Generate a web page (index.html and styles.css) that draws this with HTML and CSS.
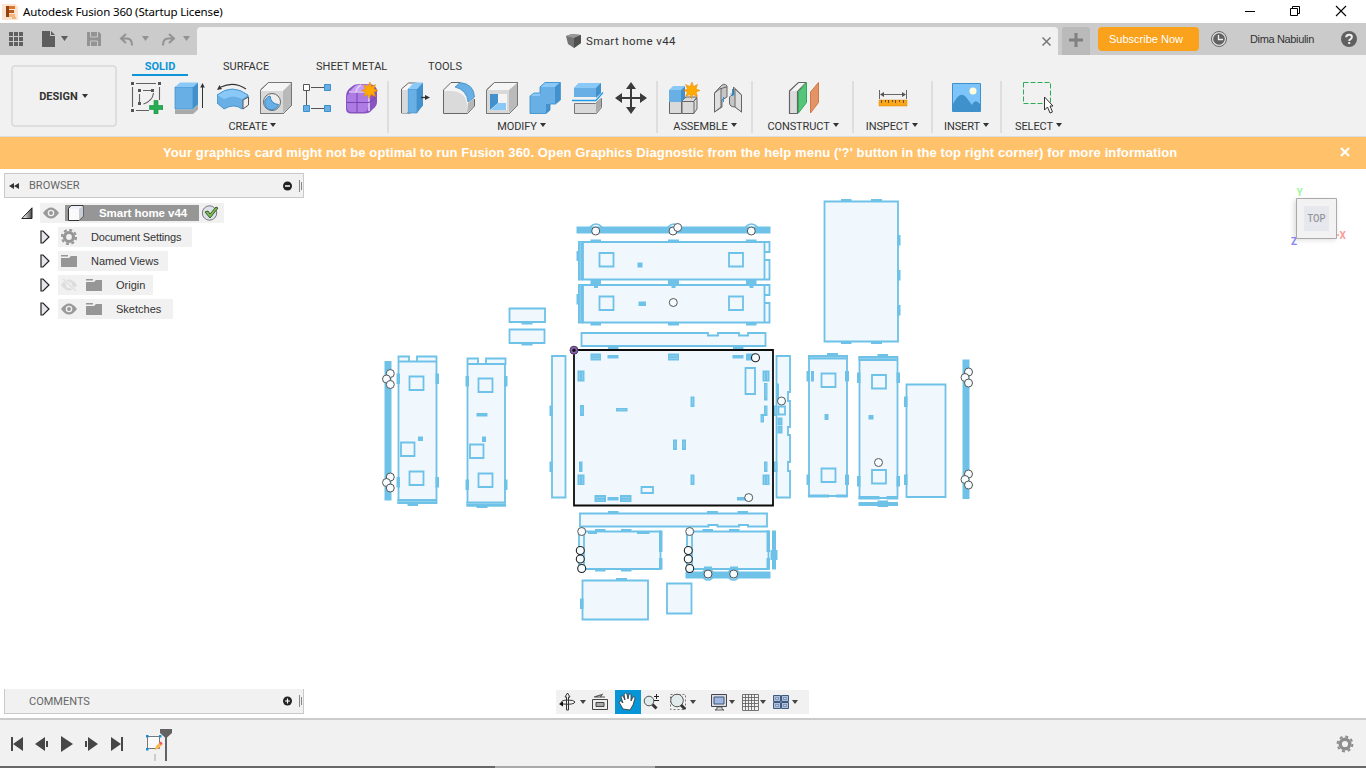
FILE: index.html
```html
<!DOCTYPE html>
<html lang="en">
<head>
<meta charset="utf-8">
<title>Autodesk Fusion 360</title>
<link rel="stylesheet" href="styles.css">
</head>
<body>
<div class="app">
<header class="titlebar">
  <svg class="logo" width="16" height="16" viewBox="0 0 16 16"><path fill="#fbe3cf" d="M0 0h13l3 3v13H0z"/><path fill="#f5b57c" d="M7 10h6v3H7zM10 13h4v2h-4z"/><path fill="#d9782d" d="M4 2h9v3H7v8H4z"/><path fill="#8e4515" d="M4 2h3v11H4z"/><path fill="#bd5a1b" d="M7 6h5v3H7z"/></svg>
  <span class="title">Autodesk Fusion 360 (Startup License)</span>
  <svg class="winctl" width="110" height="20" viewBox="0 0 110 20" fill="none" stroke="#000"><path d="M5 9.500h10M50.500 6.500h7v7h-7zM52.500 6.500v-2h7v7h-2"/><path d="m96 4 10 10m0-10-10 10" stroke-width="1.100"/></svg>
</header>
<div class="appbar">
  <div class="quick">
    <svg width="190" height="32" viewBox="0 0 190 32"><path fill="#606060" d="M9 9h4v4H9zm5 0h4v4h-4zm5 0h4v4h-4zM9 14h4v4H9zm5 0h4v4h-4zm5 0h4v4h-4zM9 19h4v4H9zm5 0h4v4h-4zm5 0h4v4h-4z"/><path fill="#5d5d5d" d="M42 8h8v5h5v11H42zM51 8l4 4h-4zM61 13h7l-3.500 5z"/><g fill="#939393"><path d="M87 9h12l2 2v12H87zM142 13h7l-3.500 5zM183 13h7l-3.500 5z"/><path fill="none" stroke="#cbcbcb" d="M90.500 9v5h7V9M90.500 23v-5h7v5"/><path d="M94 10h2v3h-2z"/><path fill="none" stroke="#939393" stroke-width="2" d="m126 11-5 4.500 5 4.500M122 15.500h5q5 0 5 7M169 11l5 4.500-5 4.500M173 15.500h-5q-5 0-5 7"/></g></svg>
  </div>
  <div class="doctab"><svg width="16" height="16" viewBox="0 0 16 16"><path fill="#737373" d="m0 3 6-2 9 1v8l-7 5-6-4z"/><path fill="#999" d="m0 3 6-2 9 1-7 3z"/><path fill="#505050" d="m8 5 7-3v8l-7 5z"/></svg><span>Smart home v44</span><svg class="tabx" width="9" height="9" viewBox="0 0 9 9" stroke="#777" stroke-width="1.500"><path d="m.5.5 8 8m0-8-8 8"/></svg></div>
  <div class="newtab"><svg width="14" height="14" viewBox="0 0 14 14"><path d="M5.500 0h3v5.500H14v3H8.500V14h-3V8.500H0v-3h5.500z" fill="#808080"/></svg></div>
  <button class="subscribe">Subscribe Now</button>
  <svg class="clock" width="16" height="16" viewBox="0 0 16 16"><circle cx="8" cy="8" r="7.500" fill="#ddd" stroke="#666"/><circle cx="8" cy="8" r="5.800" fill="#626262"/><path d="M7.500 4v4.500H12" fill="none" stroke="#eee" stroke-width="1.300"/></svg>
  <span class="user">Dima Nabiulin</span>
  <svg class="help" width="16" height="16" viewBox="0 0 16 16"><circle cx="8" cy="8" r="8" fill="#606060"/><path d="M5.200 6.300q0-2.600 2.900-2.600 2.800 0 2.800 2.300 0 1.500-1.600 2.300-1.100.6-1.100 1.700M8.200 11v2" fill="none" stroke="#eee" stroke-width="2"/></svg>
</div>
<div class="ribbon">
  <button class="design">DESIGN<i class="caret"></i></button>
  <div class="tools">
    <nav class="tabs"><span class="tab on">SOLID</span><span class="tab t2">SURFACE</span><span class="tab t3">SHEET METAL</span><span class="tab t4">TOOLS</span></nav>
    <div class="groups">
      <section class="group create"><div class="icons">
        <svg viewBox="0 0 32 32"><path d="M5 1.500h20M1.500 5v20M28.500 5v13M5 28.500h13M12 8.500h9M8.500 12v8M22.500 11q-1 8-10 11" fill="none" stroke="#606060" stroke-width="1.100"/><path fill="#555" d="M0 0h3v3H0zm27 0h3v3h-3zM0 27h3v3H0zM7 7h3v3H7zm13 0h3v3h-3zM7 20h3v3H7z"/><path fill="#27ae54" stroke="#13893a" stroke-width=".6" d="M23 18.500h4v5h5v4h-5v4.500h-4v-4.500h-4.500v-4H23z"/></svg>
        <svg viewBox="0 0 32 32"><path fill="#aaa" d="M1 27.500h18l5-5v5L19 32H1z"/><path fill="#67afe4" stroke="#3d8dca" stroke-width=".7" d="M1 5h18v22H1z"/><path fill="#8ac9f7" d="m1 5 5-4.500h18L19 5z"/><path fill="#4391cc" d="m19 5 5-4.500v22L19 27z"/><path stroke="#333" d="M28.500 26V4"/><path fill="#333" d="m28.500 1 2.300 4.500h-4.600z"/></svg>
        <svg viewBox="0 0 32 32"><path fill="#67afe4" d="M0 13q15-12 31 0v10l-6 4q-8-6-18 0l-7-6z"/><path fill="#8ac9f7" d="M0 13q15-12 31 0l-6 4q-9-5-18 0z"/><path fill="none" stroke="#3488c2" stroke-width=".8" d="M0 13q15-12 31 0v10l-6 4q-8-6-18 0l-7-6z"/><path fill="#f0f0f0" stroke="#555" d="m26 18 5.500-3v8L26 27z"/><path d="M4 5q13-6 25 2" fill="none" stroke="#333" stroke-width="1.100"/><path fill="#333" d="m0 8 2.500-5L5 7z"/></svg>
        <svg viewBox="0 0 32 32"><path d="m.5 8 8-7.500h23v23l-8 8H.5z" fill="#f5f5f5" stroke="#666"/><path fill="#d9d9d9" d="M1 9h22v22H1z"/><path fill="#b9b9b9" d="m23 9 8-8v23l-8 7z"/><path d="M.5 8v23.500h23l8-8V.5h-23z" fill="none" stroke="#777"/><circle cx="12" cy="20" r="8.500" fill="#eee" stroke="#666"/><path d="M10 14a7 7 0 1 0 8.500 8.500Q11 22 10 14z" fill="#67afe4" stroke="#3488c2"/></svg>
        <svg viewBox="0 0 32 32"><path d="M8 5.500h14M3.500 9v14M8 26.500h14" stroke="#555" fill="none"/><path d="M.5 2.500h6v6h-6z" fill="#fff" stroke="#555"/><path d="M21.500 2.500h6v6h-6zM.5 23.500h6v6h-6zm21 0h6v6h-6z" fill="#67afe4" stroke="#3b90c9"/></svg>
        <svg viewBox="0 0 32 32"><path d="M0 15q0-6 4-9l4-3q2-1 14-1 9 0 9 8v10q0 4-4 7l-3 3q-2 1.500-9 1.500H5q-5 0-5-5z" fill="#8a54c0"/><path d="M1 16q0-5 5-5h11q5 0 5 5v9q0 5-5 5H6q-5 0-5-5z" fill="#ac7be3"/><path d="m4 9 5-5q2-1.500 13-1.500h4L20 9z" fill="#c79df5"/><path d="M3 10h15q4 0 5 5v14M10 10q1-5 5-7M23 12l5-5" fill="none" stroke="#e3cff8" stroke-width="1.600"/><path d="M11 11v20M1 20.500h22l7-5" fill="none" stroke="#7a43b3" stroke-width="1"/><path fill="#ffaa00" stroke="#e78300" stroke-width=".5" d="m24 0 1.500 4.500 4-2-1.500 4.500 4 1.500-4 1.500 1.500 4.500-4.500-2-1.500 4-1.500-4-4.500 2 2-4.500-4-1.500 4-1.500-2-4.500 4.500 2z"/></svg>
      </div><div class="glabel">CREATE<i class="caret"></i></div></section>
      <section class="group modify"><div class="icons">
        <svg viewBox="0 0 32 32"><path d="m1.500 7 7-6h8v24l-6 6h-9z" fill="#f4f4f4" stroke="#666"/><path fill="#d9d9d9" d="M2 8h5v23H2z"/><path fill="#67afe4" stroke="#3b8bc5" stroke-width=".6" d="M8 7h9v24H8z"/><path fill="#8ac9f7" d="m8 7 6-6.500h9L17 7z"/><path fill="#4391cc" d="m17 7 6-6.500v23L17 31z"/><path d="M21 15.500h6" stroke="#333" stroke-width="1.300"/><path d="m25 13 5 2.500-5 2.500z" fill="#333"/></svg>
        <svg viewBox="0 0 32 32"><path d="M.5 8 8 .5h10Q31 5 31.500 17v7l-7 7.500H.5z" fill="#f4f4f4"/><path d="M1 9h8q14 1 15 14v8H1z" fill="#dadada"/><path d="m25 21 6-5v8l-7 7z" fill="#b7b7b7"/><path d="m12 5 5-4.500Q31 2 31.500 15L25 20Q24 8 12 5" fill="#67afe4" stroke="#3488c2" stroke-width=".7"/><path d="M.5 8v23.500h24l7-7.500v-7M.5 8 8 .5h9" fill="none" stroke="#666"/></svg>
        <svg viewBox="0 0 32 32"><path d="m.5 8 8-7.500h23v23l-8 8H.5z" fill="#f5f5f5" stroke="#666"/><path fill="#d8d8d8" d="M1 8h22v23H1z"/><path fill="#bababa" d="m23 8 8-7v23l-8 7z"/><path d="M4 12h17v16H4z" fill="#f4f4f4"/><path d="M4 12h8v9l-8 7z" fill="#4391cc"/><path d="m5 28 7-7h8v7z" fill="#8ac9f7"/><path d="M.5 8v23.500h23l8-8V.5h-23z" fill="none" stroke="#777"/></svg>
        <svg viewBox="0 0 32 32"><path d="M1 14h10V5l5-4.500h15V18l-5 4h-5v6l-4 3.500H1z" fill="#67afe4"/><path d="m1 14 4-3h6v3zm10-9 5-4.500h15L26 5z" fill="#8ac9f7"/><path d="m26 5 5-4.500V18l-5 4zm-5 17v6l-4 3.500V22z" fill="#4391cc"/><path d="m1 14 4-3h6V5l5-4.500h15.500V18l-5 4H21v6l-4 3.500H1z" fill="none" stroke="#328ac8" stroke-width=".8"/></svg>
        <svg viewBox="0 0 32 32"><path fill="#67afe4" d="m2 6 5-5h22v10l-5 4H2z"/><path fill="#8ac9f7" d="m2 6 5-5h22l-5 5z"/><path fill="#4391cc" d="m24 6 5-5v10l-5 5z"/><path d="M2.500 21.500h21l6-5v9l-5 6h-22z" fill="#d9d9d9" stroke="#777"/><path d="m24 21 5-5v9l-5 6z" fill="#aaa"/><path d="M0 18.500h24l7-8" stroke="#209bea" fill="none" stroke-width="1.300"/></svg>
        <svg viewBox="0 0 32 32"><path d="m16 0 5 7h-4v8h8v-4l7 5-7 5v-4h-8v8h4l-5 7-5-7h4v-8H7v4l-7-5 7-5v4h8V7h-4z" fill="#3b3b3b"/></svg>
      </div><div class="glabel">MODIFY<i class="caret"></i></div></section>
      <section class="group assemble"><div class="icons">
        <svg viewBox="0 0 32 32"><path d="M1.500 19.500h12v12h-12zM14 19.500h12v12H14zM14 19l4-4h11l-3 4M26 19l3-3v11l-3 4" fill="#dadada" stroke="#666"/><path d="M1 8h12v12H1z" fill="#67afe4"/><path d="m1 8 4-4h12l-4 4z" fill="#8ac9f7"/><path d="m13 8 4-4v12l-4 4z" fill="#4391cc"/><path fill="#ffaa00" stroke="#e78300" stroke-width=".5" d="m24 0 1.500 4.500 4-2-1.500 4.500 4 1.500-4 1.500 1.500 4.500-4.500-2-1.500 4-1.500-4-4.500 2 2-4.500-4-1.500 4-1.500-2-4.500 4.500 2z"/></svg>
        <svg viewBox="0 0 32 32"><g fill="#c6c6c6" stroke="#666"><path d="M3.500 11 9 5q4-5 7-1v11l-5 3v7l-7.500 5z"/><path fill="#dedede" d="M3.500 11 10 6v19l-6.500 5z"/><path d="M10 7q3-2 6-2" fill="none"/><path d="m22.500 5 8 8v17l-6-5q-6 0-6-4v-6q1-2 4-2z"/><path d="m24 7 6.500 6v17L24 25z" fill="#dedede"/></g><path d="M12.500 15v5m9-13v7m-2-2h4" stroke="#2097e1"/></svg>
      </div><div class="glabel">ASSEMBLE<i class="caret"></i></div></section>
      <section class="group construct"><div class="icons">
        <svg viewBox="0 0 32 32"><path d="m1.500 9 9-8.500h7l-8 9v22h-8z" fill="#dcdcdc" stroke="#666" stroke-width="1.200"/><path d="m3 9 8-8h6l-8 8z" fill="#f4f4f4"/><path d="m10.500 10 8-9.500v20l-8 10.500z" fill="#55c579" stroke="#35a858"/><path d="m22.500 10 8-9.500v20l-8 10.500z" fill="#e29466" stroke="#d07943"/></svg>
      </div><div class="glabel">CONSTRUCT<i class="caret"></i></div></section>
      <section class="group inspect"><div class="icons">
        <svg viewBox="0 0 32 32"><path d="M2.500 8v9m27-9v9M4 12.500h24" stroke="#666"/><path fill="#555" d="m3 12.500 4-2.500v5zm26 0L25 10v5z"/><path fill="#faa61a" stroke="#e48a00" stroke-width=".5" d="M2 18h28v6H2z"/><path d="M4.500 18v3m4-3v2m3-2v3m4-3v2m3-2v3m4-3v2m4-2v3" stroke="#6d5428"/></svg>
      </div><div class="glabel">INSPECT<i class="caret"></i></div></section>
      <section class="group insert"><div class="icons">
        <svg viewBox="0 0 32 32"><path d="M1.500 1.500h28v28h-28z" fill="#7dc4fa" stroke="#3e90cb"/><circle cx="22" cy="9" r="3.500" fill="#fffdda"/><path d="M2 22q7-14 13-7l6 8q3-7 8-1v7H2z" fill="#3f91cb"/></svg>
      </div><div class="glabel">INSERT<i class="caret"></i></div></section>
      <section class="group select"><div class="icons">
        <svg viewBox="0 0 32 32"><path d="M.5.5h27v21H.5z" fill="none" stroke="#2cab58" stroke-dasharray="5 2"/><path d="m21.500 15v13l3-3 2.500 6 2.500-1-2.500-6h3z" fill="#fff" stroke="#333"/></svg>
      </div><div class="glabel">SELECT<i class="caret"></i></div></section>
    </div>
  </div>
</div>
<div class="banner"><span class="msg">Your graphics card might not be optimal to run Fusion 360. Open Graphics Diagnostic from the help menu ('?' button in the top right corner) for more information</span><svg width="10" height="10" viewBox="0 0 10 10" stroke="#fff" stroke-width="2.200"><path d="m1 1 8 8m0-8-8 8"/></svg></div>
<main class="viewport">
  <svg class="sketch" width="1366" height="549" viewBox="0 169 1366 549">
    <path class="solid" d="M576.500 226.500h194v7h-194zM384.500 361h7v139.500h-7zM962.500 359.500h7V499h-7zM685.500 571.500h85v7h-85z"/>
    <g class="arc"><path d="M590 227q6-6 12 0M668 227q6-6 12 0M745.500 227q6-6 12 0"/><circle cx="708" cy="574.500" r="5.500"/><circle cx="733.500" cy="574.500" r="5.500"/></g>
    <path class="outline" d="M583 242h181.500v37.500H583zM583 285h181.500v37.500H583zM764.500 242h5v10h-5zM764.500 260h5v19.500h-5zM764.500 285h5v10h-5zM764.500 303h5v19.500h-5zM599.500 253h14v13.500h-14zM729 253h14v13.500h-14zM599.500 296.500h14V310h-14zM729 296.500h14V310h-14zM581.500 333H708v2.500h10V333h21v2.500h9V333h17.500v13h-184zM509.500 308.500H545V322h-35.500zM509.500 329.500h35V343h-35z"/>
    <path class="outline" d="M824.500 201.500H898v140h-73.500zM552 356h13.500v141.500H552zM398.500 361.500h38V503h-38zM398.500 356.500H409v5h-10.500zM417 356.500h19.500v5H417zM409.500 376.500h14V390h-14zM401 442.500h13.500V456H401zM409.500 471.500h14V485h-14zM467.500 364H505v141.500h-37.500zM467.500 358.500H478v5.500h-10.500zM486 358.500h19.500v5.500H486zM478.500 378.500h14V392h-14zM470 444.500h13.500V458H470zM478.500 473.500h14V487h-14zM809 356h38v140h-38zM821.500 373.500h14V387h-14zM821.500 468.500h14V482h-14zM859.500 357.500h38V498h-38zM872 375h14v13.500h-14zM872 470h14v13.500h-14zM906.500 384.500h39V497h-39z"/>
    <path class="outline" d="M776.500 356H790v36h-2v9h2v26h-2v8h2v27h-2v9h2v26.500h-13.500zM580 513.500h187v13h-19V525h-9v1.500h-21.500V525h-9v1.500H580zM579 531.500h5V569h-5zM584 531.500h76.500V569H584zM687 531.500h5V569h-5zM692 531.500h76.500V569H692zM582.500 580.500H648v39h-65.500zM667 583.500h24.500v30H667z"/>
    <path class="mainfill" d="M574 350h199v155.500H574z"/>
    <path class="outline" d="M745.500 368h9.500v26h-9.500zM641.500 487H653v6h-11.500zM778.500 406.500h6.500v8h-6.500z"/>
    <path class="solid" d="M578 241h5v39.500h-5zM578 284h5v39.500h-5zM576.500 251h6v10h-6zM576.500 294h6v10.500h-6zM590.500 239.500h10.500v3h-10.500zM668 239.500h11v3h-11zM746 239.500h10.500v3H746zM590.500 280h10.500v6h-10.500zM668 280h11v6h-11zM746 280h10.500v6H746zM594 286h4v2h-4zM671.500 286h4v2h-4zM749.500 286h4v2h-4zM590.500 322.500h10.500v3h-10.500zM668 322.500h11v3h-11zM746 322.500h10.500v3H746zM637.500 262.500h5v5h-5zM638.500 301.500h7.500v4.500h-7.500zM608 346.500h10.500v3H608zM733 346.500h10.500v3H733zM521.500 321.500h11v3h-11zM521.500 342.500h11v3h-11z"/>
    <path class="solid" d="M841 199h10.500v3H841zM871 199h11v3h-11zM841 341h10.500v3H841zM871 341h11v3h-11zM897 235h3.500v10.500H897zM897 270h3.500v10.500H897zM897 305h3.500v10.500H897zM549.500 405.500h3v10.500h-3zM549.500 461.500h3V472h-3zM397.500 499h39.500v5h-39.500zM407.500 499H418v7h-10.500zM396.500 373.500h3.500V384h-3.500zM435.500 373.500h3.500V384h-3.500zM396.500 477h3.500v10.500h-3.500zM435.500 477h3.500v10.500h-3.500zM418 436.500h5v4.500h-5zM466.500 501.500h39.500v5h-39.500zM476.500 501.500h11v6.500h-11zM465.500 376h3.500v10.500h-3.500zM504 376h3.500v10.500H504zM465.500 479.500h3.500V490h-3.500zM504 479.500h3.500V490H504zM476.500 413h11v3.500h-11zM482 436.500h4v5.500h-4z"/>
    <path class="solid" d="M808 355h39.500v4.500H808zM827 353h11v6.500h-11zM808 494.500h21v3h-21zM836 494.500h11.500v3H836zM806.500 371h3v10.500h-3zM811 371h3v10.500h-3zM845 371h4v10.500h-4zM806.500 474.500h3V485h-3zM845 474.500h4V485h-4zM824.500 414h4v6h-4zM858.500 356h39.500v5h-39.500zM877.500 354h10.500v7h-10.500zM858.500 496h21v3.500h-21zM886.500 496H898v3.500h-11.500zM858.500 502H898v4h-39.500zM877.500 500.500H888v6.500h-10.500zM857 372.500h3.500V383H857zM896.500 372.500h3.500V383h-3.500zM857 476h3.500v10.500H857zM896.500 476h3.500v10.500h-3.500zM868.500 415h5v4.500h-5zM904 396.500h3.500V407H904zM904 474.500h3.500V485H904z"/>
    <path class="solid" d="M590.500 353.500H601v7h-10.500zM607.500 355h11v3.500h-11zM668 353.500h11v7h-11zM732.500 355h11v3.500h-11zM746 353.500h9v7h-9zM577.500 370.500h7v11h-7zM762.500 370.500h7v11h-7zM764 383h3.500v17.500H764zM580 405h4v11h-4zM616 408h11.500v3.500H616zM690.500 396.500h4V407h-4zM764 405.500h3.500V416H764zM760.500 414h3.500v8.500h-3.500zM673 439.500h4V450h-4zM682 439.500h4V450h-4zM579 461.500h3.500V472H579zM764 461.500h3.500V472H764zM577.500 474.500h7v10.500h-7zM762.500 474.500h7v10.500h-7zM690.500 474.500h4V485h-4zM594.500 495H606v7h-11.500zM607.500 497h11v3.500h-11zM620 495h11.500v7H620zM737 497h10v3.500h-10z"/>
    <path class="solid" d="M776 383.500h3V400h-3zM774 405.500h3.500V416H774zM774 461.500h3.500V472H774zM777.500 417.500h5v8h-5zM777.500 426h5v7.500h-5zM608 511h10.500v3H608zM707 511h11v3h-11zM737.500 511H748v3h-10.500zM588 531h9v3h-9zM595 529h10.500v3H595zM621 529h10.500v3H621zM637 531h12.500v3H637zM595 568.500h10.500v3H595zM621 568.500h10.500v3H621zM659 530.500h3.500V552H659zM659 558h3.500v11.500H659zM766.500 530.500h3.500V552h-3.500zM766.500 558h3.500v11.500h-3.500zM772 530.500h4v39h-4zM770.500 550h7v10h-7zM702.500 529H713v3h-10.500zM729 529h10.500v3H729zM616 578h11v3h-11zM580 598.500h3.500V609H580zM704 566.500h8v6h-8zM730 566.500h8v6h-8z"/>
    <path class="seam" d="M398 501.500h38M467 503.500h38M580.300 242v37.500M580.300 285v37.500M591.500 356h9M591.500 358.500h9M669 356h9M669 358.500h9M579.500 372v8m3-8v8M764.500 372v8m3-8v8M579.500 476v8m3-8v8M764.500 476v8m3-8v8M596 497.500h8M596 500h8M622 497.500h8M622 500h8M809 357.300h37M860 358.500h37M775.700 407v7M775.700 463v7M780 419.500v4M780 428v4M582 407v7M692.500 398v7M692.500 476v7M675 441v7M684 441v7M766 384v14M766 407v7M766 463v7M762.200 416v5M617.500 409.700h8"/>
    <path class="edge" d="M574 350h199v155.500H574z"/>
    <g class="pt"><circle cx="595.700" cy="231" r="4"/><circle cx="673" cy="231" r="4"/><circle cx="677.700" cy="227.500" r="4"/><circle cx="751.300" cy="231" r="4"/><circle cx="673.300" cy="302.500" r="4"/><circle class="dark" cx="755.500" cy="357.700" r="4"/><circle cx="748.700" cy="497.600" r="4"/><circle cx="781.500" cy="401" r="4"/><circle cx="390.300" cy="373.500" r="4"/><circle cx="386.500" cy="379" r="4"/><circle cx="390.300" cy="384.500" r="4"/><circle cx="390.300" cy="477" r="4"/><circle cx="386.500" cy="482.500" r="4"/><circle cx="390.300" cy="488" r="4"/><circle cx="968.500" cy="372" r="4"/><circle cx="965" cy="377.500" r="4"/><circle cx="968.500" cy="383" r="4"/><circle cx="968.500" cy="474" r="4"/><circle cx="965" cy="479.500" r="4"/><circle cx="968.500" cy="485" r="4"/><circle cx="878.500" cy="462.500" r="4"/><circle cx="581.700" cy="531.500" r="4"/><circle class="dark" cx="580.300" cy="550.500" r="4"/><circle class="dark" cx="580.300" cy="559" r="4"/><circle class="dark" cx="581.700" cy="568.500" r="4"/><circle cx="689.700" cy="531.500" r="4"/><circle class="dark" cx="688.300" cy="550.500" r="4"/><circle class="dark" cx="688.300" cy="559" r="4"/><circle class="dark" cx="689.700" cy="568.500" r="4"/><circle cx="708" cy="574" r="4"/><circle cx="733.700" cy="574" r="4"/></g>
    <circle cx="574" cy="350.200" r="4" fill="#8a60b5" stroke="#4a3a5e"/><circle cx="574" cy="350.200" r="1.700" fill="#111"/>
  </svg>
  <aside class="browser">
    <div class="panelhead"><svg width="10" height="6" viewBox="0 0 10 6"><path d="M5 0v6L0 3zm5 0v6L5 3z" fill="#333"/></svg><span>BROWSER</span><svg class="grip" width="19" height="12" viewBox="0 0 19 12"><circle cx="4.500" cy="6" r="4.500" fill="#222"/><path d="M2 6h5" stroke="#fff" stroke-width="1.500"/><path d="M16.500 0v12m2-10v8" stroke="#888"/></svg></div>
    <div class="row root"><svg class="tri" width="12" height="12" viewBox="0 0 12 12"><defs><linearGradient id="t"><stop offset=".2" stop-color="#eee"/><stop offset="1" stop-color="#444"/></linearGradient></defs><path d="M11 .8v10.700H.8z" fill="url(#t)" stroke="#222"/></svg><div class="cell rootcell"><svg class="eye" width="16" height="12" viewBox="0 0 16 12"><path d="M0 6q8-11 16 0-8 11-16 0" fill="#999"/><circle cx="8" cy="6" r="3.300" fill="#f1f1f1"/><circle cx="8" cy="6" r="2" fill="#999"/></svg><div class="rootname"><svg width="20" height="16" viewBox="0 0 20 16"><path d="M3.500 3.500 6 .5h12v11l-4 4H3.500z" fill="#eef1f7" stroke="#333"/><path d="M4 4h10v11H4z" fill="#fafafa"/><path d="m14 4 4-3v10l-4 4z" fill="#c8ccd6"/></svg><b>Smart home v44</b></div><svg width="18" height="16" viewBox="0 0 18 16"><circle cx="7.500" cy="8" r="7.200" fill="#dde1ea" stroke="#777"/><path d="m3 7 3-1 2 3 6-7 2 1-8 10z" fill="#80bb55" stroke="#355d26"/></svg></div></div>
    <div class="row"><svg class="arrow" width="10" height="14" viewBox="0 0 10 14"><path d="M1 1h2l6 6-6 6H1z" fill="#e5e5ea" stroke="#222" stroke-width="1.200"/></svg><div class="cell c1"><svg width="18" height="16" viewBox="0 0 18 16"><circle cx="8" cy="8" r="4.500" fill="none" stroke="#969696" stroke-width="3.200"/><circle cx="8" cy="8" r="7" fill="none" stroke="#969696" stroke-width="2.200" stroke-dasharray="3 2.498"/></svg><span>Document Settings</span></div></div>
    <div class="row"><svg class="arrow" width="10" height="14" viewBox="0 0 10 14"><path d="M1 1h2l6 6-6 6H1z" fill="#e5e5ea" stroke="#222" stroke-width="1.200"/></svg><div class="cell c2"><svg width="18" height="14" viewBox="0 0 18 14"><path d="M0 1h7v1.500H0zm0 3h8l2-2h6v11H0z" fill="#969696"/></svg><span>Named Views</span></div></div>
    <div class="row"><svg class="arrow" width="10" height="14" viewBox="0 0 10 14"><path d="M1 1h2l6 6-6 6H1z" fill="#e5e5ea" stroke="#222" stroke-width="1.200"/></svg><div class="cell c3"><svg class="eye" width="16" height="12" viewBox="0 0 16 12"><path d="M0 6q8-11 16 0-8 11-16 0" fill="#ddd"/><circle cx="8" cy="6" r="3" fill="#f1f1f1"/><path d="m2 0 13 12" stroke="#f1f1f1" stroke-width="3"/><path d="m2 0 13 12" stroke="#ddd" stroke-width="1.200"/></svg><svg width="18" height="14" viewBox="0 0 18 14"><path d="M0 1h7v1.500H0zm0 3h8l2-2h6v11H0z" fill="#969696"/></svg><span>Origin</span></div></div>
    <div class="row"><svg class="arrow" width="10" height="14" viewBox="0 0 10 14"><path d="M1 1h2l6 6-6 6H1z" fill="#e5e5ea" stroke="#222" stroke-width="1.200"/></svg><div class="cell c4"><svg class="eye" width="16" height="12" viewBox="0 0 16 12"><path d="M0 6q8-11 16 0-8 11-16 0" fill="#999"/><circle cx="8" cy="6" r="3.300" fill="#f1f1f1"/><circle cx="8" cy="6" r="2" fill="#999"/></svg><svg width="18" height="14" viewBox="0 0 18 14"><path d="M0 1h7v1.500H0zm0 3h8l2-2h6v11H0z" fill="#969696"/></svg><span>Sketches</span></div></div>
  </aside>
  <svg class="cube" width="72" height="70" viewBox="0 0 72 70"><defs><filter id="s" x="-20%" y="-20%" width="140%" height="140%"><feGaussianBlur stdDeviation="2.500"/></filter></defs><path d="M14 15h42v40H14z" fill="#ddd" filter="url(#s)"/><g font-size="10" font-weight="bold"><text x="16.500" y="11" fill="#9df79d">Y</text><text x="59.500" y="54" fill="#f99c9c">X</text><text x="11" y="59.500" fill="#8585f8">Z</text></g><path d="M16.500 13.500h40v40h-40z" fill="#f2f2f2" stroke="#aaa"/><path d="M24 21h25v25H24z" fill="#e7e8ee"/><text x="36.500" y="37" text-anchor="middle" fill="#95979c" font-size="10.500" font-weight="500" textLength="18" lengthAdjust="spacingAndGlyphs">TOP</text><path d="M57 50h2" stroke="#f66"/></svg>
  <div class="navbar">
    <div class="nb n1"><svg width="18" height="18" viewBox="0 0 18 18"><path d="M7.500 17V4H6l2.500-4L11 4H9.500v13zM2 10q0-3 7-3 6 0 7 2-1 3-12 2" fill="none" stroke="#333"/><path d="m0 11 4-2.500v5z" fill="#111"/></svg><i class="caret"></i></div>
    <div class="nb n2"><svg width="16" height="18" viewBox="0 0 16 18"><path d="M.5 6.500h15v10H.5z" fill="#eee" stroke="#444"/><path d="M4 9.500h8v4H4z" fill="#aaa" stroke="#444"/><path d="m2 4 8-2.500-2 3m-6-.5h11" fill="none" stroke="#555" stroke-width="1.200"/></svg></div>
    <div class="nb n3"><svg width="18" height="18" viewBox="0 0 18 18"><path d="M5 16 1 9q1-2 3 0l1 1-2-6q0-2 2-1l2 4-1-6q2-2 3 0l1 5 1-5q2-1 2 1v6l2-4q2-1 2 1l-2 7-3 5z" fill="#fff" stroke="#333" stroke-width=".8"/></svg></div>
    <div class="nb n4"><svg width="18" height="18" viewBox="0 0 18 18"><circle cx="6" cy="8" r="4.800" fill="#dfeaec" stroke="#555"/><path d="m9.500 11.500 4 4" stroke="#333" stroke-width="3"/><path d="M11 3.500h5M13.500 1v5M11 7.500h5" stroke="#222"/></svg></div>
    <div class="nb n5"><svg width="18" height="18" viewBox="0 0 18 18"><path d="M1.500 1.500h15v15h-15z" fill="none" stroke="#777" stroke-dasharray="2 2"/><circle cx="8" cy="7.500" r="6.300" fill="#e1ebec" stroke="#555"/><path d="m12 12 4 4" stroke="#333" stroke-width="3"/></svg><i class="caret"></i></div>
    <div class="nb n6"><svg width="17" height="18" viewBox="0 0 17 18"><path d="M.5 1.500h15v12H.5z" fill="#ddd" stroke="#445"/><path d="M3 4h10v7H3z" fill="#9fb7df" stroke="#3b5580"/><path d="M6 14h5v2l2 1H4l2-1z" fill="#ddd" stroke="#444" stroke-width=".8"/></svg><i class="caret"></i></div>
    <div class="nb n7"><svg width="17" height="17" viewBox="0 0 17 17"><path d="M.5.5h16v16H.5zM3.500 0v16m3-16v16m3-16v16m3-16v16M0 3.500h16m-16 3h16m-16 3h16m-16 3h16" fill="none" stroke="#666" stroke-width=".9"/></svg><i class="caret"></i></div>
    <div class="nb n8"><svg width="16" height="14" viewBox="0 0 16 14"><g fill="#adc1df" stroke="#3f5980"><path d="M.5.500h7v6h-7zm8 0h7v6h-7zm-8 7h7v6h-7zm8 0h7v6h-7z"/></g><path d="M2.500 2.500h3v2h-3zm8 0h3v2h-3zm-8 7h3v2h-3zm8 0h3v2h-3z" fill="#c4d3ea" stroke="#5a7197" stroke-width=".6"/></svg><i class="caret"></i></div>
  </div>
  <div class="comments"><span>COMMENTS</span><svg class="grip" width="19" height="12" viewBox="0 0 19 12"><circle cx="4.500" cy="6" r="4.500" fill="#222"/><path d="M2 6h5M4.500 3.500v5" stroke="#fff" stroke-width="1.200"/><path d="M16.500 0v12m2-10v8" stroke="#888"/></svg></div>
</main>
<footer class="timeline">
  <svg class="play" width="190" height="46" viewBox="0 0 190 46"><path fill="#464646" d="M11 17h2v14h-2zM23 17v14l-10-7zM45 17v14l-10-7zM46 21h2v6h-2zM61 16l12 8-12 8zM85 21h2v6h-2zM88 17v14l10-7zM111 17v14l10-7zM121 17h2v14h-2z"/><path d="M147.500 16.500h12v12h-12z" fill="#fafafa" stroke="#777"/><path fill="#168fe0" d="M146 15h2.500v2.500H146zm13 0h2.500v2.500H159zM146 28h2.500v2.500H146z"/><path d="m155 30 1-4 4-4 2.500 2.500-4 4z" fill="#f8ba54"/><path d="m159 23 2-1.500 1.500 2-1.500 1.500z" fill="#f0525a"/><path d="M154 34h2v7h-2z" fill="#ccc"/><path d="M160 9h12v4l-5 4.500V41h-2V17.500l-5-4.500z" fill="#626262"/></svg>
  <svg class="gear" width="18" height="18" viewBox="0 0 18 18"><circle cx="9" cy="9" r="4.800" fill="none" stroke="#8d8d8d" stroke-width="3.400"/><circle cx="9" cy="9" r="7.400" fill="none" stroke="#8d8d8d" stroke-width="2" stroke-dasharray="3 2.812"/></svg>
</footer>
<div class="bottomline"><span></span></div>
</div>
</body>
</html>
```
FILE: styles.css
```css
* { box-sizing: border-box; }
body { margin: 0; overflow: hidden; background: #fff; font: 11px "Liberation Sans", Arial, sans-serif; color: #333; }
svg { display: block; flex: none; }
button { font: inherit; padding: 0; border: 0; }
.app { width: 1366px; height: 768px; display: flex; flex-direction: column; }
.app > * { flex: none; }
.titlebar { height: 23px; display: flex; align-items: center; padding-left: 2px; background: #fff; }
.title { font: 11.500px "Noto Sans", sans-serif; color: #000; margin-left: 5px; white-space: nowrap; letter-spacing: -0.150px; }
.winctl { margin-left: auto; margin-right: 16px; }
.appbar { height: 32px; display: flex; align-items: center; background: #cbcbcb; }
.quick { width: 197px; }
.doctab { width: 861px; height: 28px; align-self: flex-end; border-radius: 4px 4px 0 0; background: #f1f1f1; display: flex; align-items: center; padding-left: 369px; font: 11.500px Roboto, sans-serif; }
.doctab span { margin-left: 4px; white-space: nowrap; letter-spacing: 0.400px; }
.tabx { margin-left: auto; margin-right: 7px; }
.newtab { width: 28px; height: 28px; margin-left: 4px; align-self: flex-end; display: flex; align-items: center; justify-content: center; background: #bababa; border-radius: 3px 3px 0 0; }
.newtab svg { margin-bottom: 2px; }
.subscribe { width: 101px; height: 24px; margin-left: 8px; padding-right: 5px; border-radius: 4px; background: #faa21b; color: #fff; }
.clock { margin-left: 12px; }
.user { margin-left: 23px; width: 91px; letter-spacing: -0.350px; white-space: nowrap; }
.ribbon { height: 82px; display: flex; background: #f1f1f1; border-bottom: 1px solid #ddd; font-family: Roboto, sans-serif; }
.design { width: 106px; height: 62px; margin: 10px 4px 0 11px; padding-right: 1px; border: 2px solid #dedede; border-radius: 4px; background: #f1f1f1; font: bold 11px Roboto, sans-serif; color: #333; white-space: nowrap; }
.caret { display: inline-block; border: 3px solid transparent; border-top: 4px solid #333; border-bottom: 0; margin-left: 5px; vertical-align: 2px; }
.design .caret { margin-left: 4px; }
.tabs { height: 26px; display: flex; padding-top: 5px; }
.tab { white-space: nowrap; line-height: 13px; }
.tab.on { width: 56px; height: 16px; margin-left: 11px; text-align: center; font-weight: bold; color: #0d95d8; border-bottom: 2px solid #0d95d8; }
.tab.t2 { margin-left: 35px; width: 93px; }
.tab.t3 { width: 112px; }
.groups { display: flex; height: 52px; }
.group { height: 52px; border-right: 2px solid #dedede; display: flex; flex-direction: column; align-items: center; }
.icons { display: flex; flex: none; gap: 11px; height: 39px; padding-top: 1px; }
.icons svg { width: 32px; height: 32px; }
.glabel { flex: none; white-space: nowrap; line-height: 14px; letter-spacing: -0.100px; margin-right: 1px; }
.glabel .caret { margin-left: 3px; vertical-align: 3px; }
.create { width: 268px; } .modify { width: 269px; padding-left: 1px; } .assemble { width: 95px; padding-left: 2px; } .construct { width: 101px; padding-left: 2px; } .inspect { width: 79px; } .insert { width: 69px; padding-left: 1px; } .select { width: 73px; border: 0; padding-left: 1px; }
.create .glabel, .modify .glabel { margin-right: 3px; }
.banner { height: 32px; background: #ffc26b; color: #fff; font-weight: bold; font-size: 13px; letter-spacing: 0.114px; display: flex; align-items: center; padding: 0 16px 2px 163px; justify-content: space-between; white-space: nowrap; }
.viewport { height: 549px; position: relative; background: #fff; overflow: hidden; }
.solid { fill: #6ec1e7; }
.outline { fill: #f0f8fe; stroke: #6ec1e7; stroke-width: 1.800; }
.mainfill { fill: #f0f8fe; }
.edge { fill: none; stroke: #0b0b0b; stroke-width: 1.800; }
.arc { fill: none; stroke: #6ec1e7; stroke-width: 1.600; }
.seam { fill: none; stroke: #a6d9f2; stroke-width: .6; }
.pt { fill: #f7fcff; stroke: #555; stroke-width: 1; }
.dark { stroke: #222; stroke-width: 1.100; }
.browser { position: absolute; left: 4px; top: 4px; width: 300px; }
.panelhead { height: 25px; border: 1px solid #c9c9c9; background: #f1f1f1; display: flex; align-items: center; padding: 0 1px 0 4px; font: 11px Roboto, sans-serif; color: #666; margin-bottom: 3px; }
.panelhead span { margin-left: 10px; }
.grip { margin-left: auto; }
.row { height: 24px; display: flex; align-items: center; padding-left: 36px; }
.root { padding-left: 17px; }
.arrow { margin-right: 8px; }
.cell { height: 20px; background: #f1f1f1; display: flex; align-items: center; white-space: nowrap; padding-left: 3px; }
.rootcell { width: 184px; margin-left: 7px; }
.rootname { width: 134px; height: 16px; background: #969696; color: #fff; display: flex; align-items: center; margin: 0 3px 0 6px; }
.rootname b { margin-left: 14px; font-size: 11.500px; letter-spacing: -0.050px; }
.c1 { width: 134px; letter-spacing: -0.150px; } .c2 { width: 110px; } .c3 { width: 95px; } .c4 { width: 115px; }
.cell > span { margin-left: 12px; }
.eye + svg { margin-left: 9px; }
.cube { position: absolute; left: 1280px; top: 16px; font-family: Roboto, sans-serif; }
.navbar { position: absolute; left: 556px; top: 521px; width: 253px; height: 24px; background: #f1f1f1; display: flex; }
.nb { display: flex; align-items: center; padding-left: 3px; }
.nb .caret { margin-left: 3px; border-top-color: #444; }
.n1 { width: 33px; padding-left: 3px; } .n2 { width: 26px; } .n3 { width: 26px; background: #0696d7; } .n4 { width: 24px; padding-left: 2px; } .n5 { width: 42px; padding-left: 4px; } .n6 { width: 32px; padding-left: 4px; } .nb.n6 .caret { margin-left: 1px; } .n7 { width: 31px; } .nb.n7 .caret { margin-left: 1px; } .n8 { width: 39px; }
.comments { position: absolute; left: 4px; top: 520px; width: 300px; height: 25px; border: 1px solid #c9c9c9; border-top: 0; background: #f1f1f1; padding: 0 1px 0 24px; display: flex; align-items: center; font: 11px Roboto, sans-serif; color: #666; }
.timeline { height: 48px; border-top: 2px solid #cbcbcb; background: #f1f1f1; display: flex; justify-content: space-between; }
.gear { margin: 15px 12px 0 0; }
.bottomline { height: 2px; background: #686868; padding-left: 495px; }
.bottomline span { display: block; width: 160px; height: 2px; background: #aaa; }
```
